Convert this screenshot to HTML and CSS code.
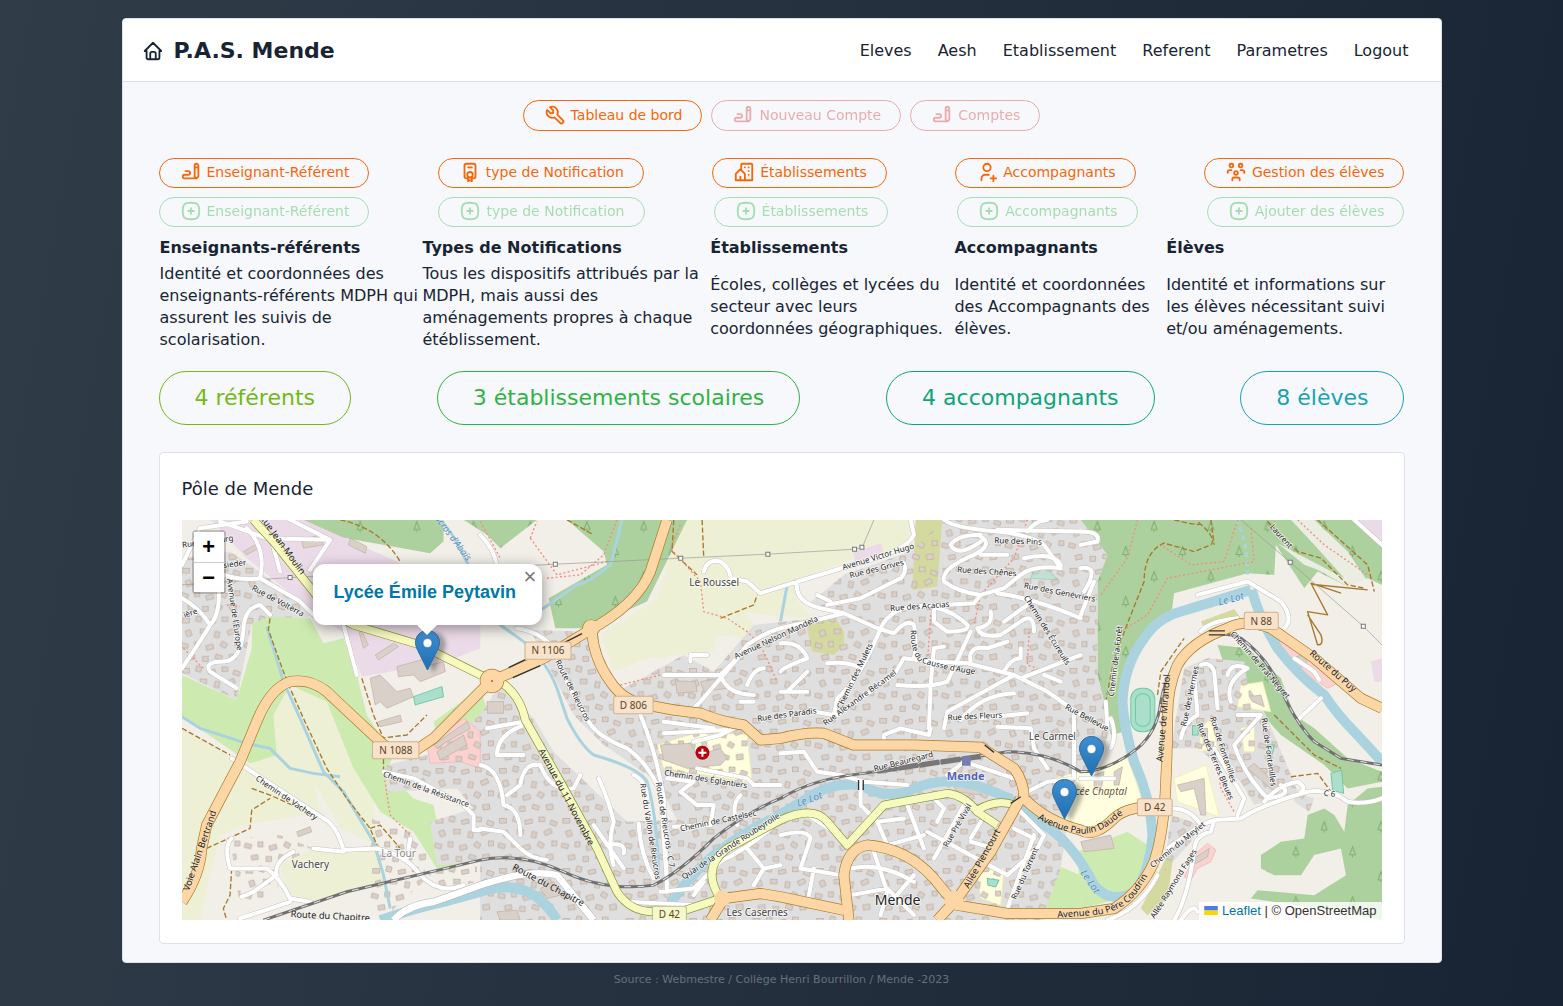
FILE: index.html
```html
<!DOCTYPE html>
<html lang="fr">
<head>
<meta charset="utf-8">
<meta name="viewport" content="width=device-width, initial-scale=1">
<title>P.A.S. Mende</title>
<link rel="stylesheet" href="styles.css">
</head>
<body>
<svg class="sprite" aria-hidden="true">
  <symbol id="i-home" viewBox="0 0 24 24"><path d="M5 12H3l9-9 9 9h-2M5 12v7a2 2 0 0 0 2 2h10a2 2 0 0 0 2-2v-7M9 21v-6a2 2 0 0 1 2-2h2a2 2 0 0 1 2 2v6"/></symbol>
  <symbol id="i-tool" viewBox="0 0 24 24"><path d="M7 10h3V7L6.500 3.500a6 6 0 0 1 8 8l6 6a2 2 0 0 1-3 3l-6-6a6 6 0 0 1-8-8L7 10"/></symbol>
  <symbol id="i-writing" viewBox="0 0 24 24"><path d="M20 17V5c0-1.121-.879-2-2-2s-2 .879-2 2v12l2 2 2-2zM16 7h4M18 19H5a2 2 0 1 1 0-4h4a2 2 0 1 0 0-4H6"/></symbol>
  <symbol id="i-certificate" viewBox="0 0 24 24"><path d="M9 15a3 3 0 1 0 6 0 3 3 0 1 0-6 0M10 7h4M10 18v4l2-1 2 1v-4M10 19H8a2 2 0 0 1-2-2V5a2 2 0 0 1 2-2h8a2 2 0 0 1 2 2v12a2 2 0 0 1-2 2h-2"/></symbol>
  <symbol id="i-building" viewBox="0 0 24 24"><path d="M8 9l5 5v7H8v-4m0 4H3v-7l5-5m1 1V4a1 1 0 0 1 1-1h10a1 1 0 0 1 1 1v17h-8M13 7v.01M17 7v.01M17 11v.01M17 15v.01"/></symbol>
  <symbol id="i-user-plus" viewBox="0 0 24 24"><path d="M8 7a4 4 0 1 0 8 0 4 4 0 0 0-8 0M16 19h6M19 16v6M6 21v-2a4 4 0 0 1 4-4h4"/></symbol>
  <symbol id="i-group" viewBox="0 0 24 24"><path d="M10 13a2 2 0 1 0 4 0 2 2 0 0 0-4 0M8 21v-1a2 2 0 0 1 2-2h4a2 2 0 0 1 2 2v1M15 5a2 2 0 1 0 4 0 2 2 0 0 0-4 0M17 10h2a2 2 0 0 1 2 2v1M5 5a2 2 0 1 0 4 0 2 2 0 0 0-4 0M3 13v-1a2 2 0 0 1 2-2h2"/></symbol>
  <symbol id="i-plus" viewBox="0 0 24 24"><path d="M9 12h6M12 9v6M12 3c7.200 0 9 1.800 9 9s-1.800 9-9 9-9-1.800-9-9 1.800-9 9-9z"/></symbol>
  <symbol id="i-marker" viewBox="0 0 25 41"><path fill="url(#pin)" stroke="#2a6ca5" d="M12.500.500C5.600.500.500 6 .500 12.600c0 3 1.200 5.600 2.300 8L12.500 40l9.700-19.400c1.100-2.400 2.300-5 2.300-8C24.500 6 19.400.500 12.500.500z"/><circle cx="12.500" cy="13" r="4.500" fill="#fff" stroke="#2a6ca5" stroke-width=".6"/></symbol>
  <defs><linearGradient id="pin" x1="0" y1="0" x2="0" y2="1"><stop offset="0" stop-color="#3f8fd0"/><stop offset="1" stop-color="#1e6fb4"/></linearGradient></defs>
</svg>

<div class="shell">
  <header class="topbar">
    <a class="brand" href="#"><svg class="icon"><use href="#i-home"/></svg><h1>P.A.S. Mende</h1></a>
    <nav class="menu">
      <a href="#">Eleves</a><a href="#">Aesh</a><a href="#">Etablissement</a><a href="#">Referent</a><a href="#">Parametres</a><a href="#">Logout</a>
    </nav>
  </header>

  <main class="content">
    <div class="tabs">
      <button class="btn orange" type="button"><svg class="icon"><use href="#i-tool"/></svg>Tableau de bord</button>
      <button class="btn red" type="button" disabled><svg class="icon"><use href="#i-writing"/></svg>Nouveau Compte</button>
      <button class="btn red" type="button" disabled><svg class="icon"><use href="#i-writing"/></svg>Comptes</button>
    </div>
    <div class="actions">
      <button class="btn orange" type="button"><svg class="icon"><use href="#i-writing"/></svg>Enseignant-Référent</button>
      <button class="btn orange" type="button"><svg class="icon"><use href="#i-certificate"/></svg>type de Notification</button>
      <button class="btn orange" type="button"><svg class="icon"><use href="#i-building"/></svg>Établissements</button>
      <button class="btn orange" type="button"><svg class="icon"><use href="#i-user-plus"/></svg>Accompagnants</button>
      <button class="btn orange" type="button"><svg class="icon"><use href="#i-group"/></svg>Gestion des élèves</button>
    </div>
    <div class="actions">
      <button class="btn green" type="button" disabled><svg class="icon"><use href="#i-plus"/></svg>Enseignant-Référent</button>
      <button class="btn green" type="button" disabled><svg class="icon"><use href="#i-plus"/></svg>type de Notification</button>
      <button class="btn green" type="button" disabled><svg class="icon"><use href="#i-plus"/></svg>Établissements</button>
      <button class="btn green" type="button" disabled><svg class="icon"><use href="#i-plus"/></svg>Accompagnants</button>
      <button class="btn green" type="button" disabled><svg class="icon"><use href="#i-plus"/></svg>Ajouter des élèves</button>
    </div>
    <table class="intro">
      <colgroup><col class="c1"><col class="c2"><col class="c3"><col class="c4"><col class="c5"></colgroup>
      <thead><tr><th>Enseignants-référents</th><th>Types de Notifications</th><th>Établissements</th><th>Accompagnants</th><th>Élèves</th></tr></thead>
      <tbody><tr>
        <td>Identité et coordonnées des enseignants-référents MDPH qui assurent les suivis de scolarisation.</td>
        <td>Tous les dispositifs attribués par la MDPH, mais aussi des aménagements propres à chaque étéblissement.</td>
        <td>Écoles, collèges et lycées du secteur avec leurs coordonnées géographiques.</td>
        <td>Identité et coordonnées des Accompagnants des élèves.</td>
        <td>Identité et informations sur les élèves nécessitant suivi et/ou aménagements.</td>
      </tr></tbody>
    </table>
    <div class="stats">
      <a class="stat lime" href="#">4 référents</a>
      <a class="stat leaf" href="#">3 établissements scolaires</a>
      <a class="stat teal" href="#">4 accompagnants</a>
      <a class="stat cyan" href="#">8 élèves</a>
    </div>

    <section class="card">
      <h2>Pôle de Mende</h2>
      <div class="map">
        <svg class="tiles" viewBox="6 15 3597 1200" preserveAspectRatio="xMidYMid slice" role="img" aria-label="Carte de Mende">
          <defs>
            <pattern id="houses" width="190" height="150" patternUnits="userSpaceOnUse">
              <g fill="#d9d0c9" stroke="#b9a99c" stroke-width="2">
                <rect x="8" y="10" width="20" height="14"/><rect x="48" y="4" width="16" height="16" transform="rotate(15 56 12)"/><rect x="84" y="14" width="22" height="12" transform="rotate(-12 95 20)"/><rect x="126" y="6" width="17" height="14"/><rect x="160" y="18" width="20" height="13" transform="rotate(20 170 24)"/>
                <rect x="18" y="46" width="16" height="18" transform="rotate(-20 26 55)"/><rect x="60" y="42" width="20" height="14"/><rect x="104" y="50" width="14" height="18" transform="rotate(10 111 59)"/><rect x="142" y="44" width="22" height="14" transform="rotate(-25 153 51)"/>
                <rect x="4" y="86" width="20" height="13" transform="rotate(14 14 92)"/><rect x="44" y="80" width="15" height="15"/><rect x="78" y="90" width="22" height="14" transform="rotate(-15 89 97)"/><rect x="122" y="82" width="18" height="15" transform="rotate(30 131 90)"/><rect x="164" y="78" width="16" height="14"/>
                <rect x="24" y="120" width="20" height="14" transform="rotate(-10 34 127)"/><rect x="68" y="124" width="16" height="15"/><rect x="106" y="120" width="20" height="13" transform="rotate(18 116 126)"/><rect x="148" y="118" width="20" height="16" transform="rotate(-8 158 126)"/>
              </g>
            </pattern>
            <pattern id="trees" width="170" height="150" patternUnits="userSpaceOnUse">
              <path d="M30 20l-9 24h18zM30 44v8M115 95l-9 24h18zM115 119v8" fill="none" stroke="#7fae72" stroke-width="3"/>
            </pattern>
            <path id="rail" d="M250 1215 500 1130 900 1035Q1020 1010 1150 1070 1280 1130 1420 1110 1500 1070 1600 970 1700 890 1800 850 1900 790 2050 775L2320 735 2480 710Q2600 710 2700 770 2780 770 2870 700 2930 650 2940 560 2960 450 3040 380 3110 340 3180 370 3250 420 3290 500 3340 620 3400 680L3480 730 3603 750"/>
            <path id="daude" d="M2570 912Q2640 950 2695 955 2750 960 2800 918 2830 890 2880 880"/>
            <path id="coudrin" d="M2630 1208 2740 1200Q2830 1190 2870 1130 2920 1060 2950 980"/>
            <path id="causse" d="M2190 345Q2190 410 2215 440 2280 465 2400 480"/>
          </defs>
          <path class="bare" d="M0 0H3610V1220H0z"/>
          <g class="farm">
            <path d="M6 640 200 750 270 600 300 540 400 510 500 620 580 860 590 990 480 940 420 830 400 810 430 910 370 900 200 930 120 960 60 1215H6z"/>
            <path d="M300 1050 400 1000 590 1000 610 1110 390 1160 320 1140z"/>
            <path d="M1500 15H2180L2190 100 2020 130 1840 200 1850 260 1900 310 1750 300 1690 290 1740 350 1700 370 1610 360 1600 410 1400 430 1300 470 1260 360 1430 250z"/>
          </g>
          <g class="grass">
            <path d="M6 480 170 555 215 400 215 320 270 300 390 310 430 385 490 370 530 480 560 600 640 720 620 770 700 850 760 870 780 970 900 990V1040L770 1060 700 950 600 890 520 760 440 560 330 510 280 600 290 720 210 745 6 605z"/>
            <path d="M760 620 900 520 925 600 900 720 780 700z"/>
            <path d="M2700 1180 2690 1010 2840 950 2900 990 2880 1090 2820 1150z"/><path d="M2590 1180 2640 1055 2700 1080V1190z"/>
            <path d="M1970 388 2050 400 2045 445 1960 432z"/><path d="M1950 840 2000 820 2005 835 1960 858z"/><path d="M1480 1165 1540 1110 1555 1165z"/>
          </g>
          <g class="forest">
            <path id="f1" d="M340 15H790V80L750 115 440 60zM850 15H1070L960 100 920 60zM1160 15H1520L1400 260 1310 300 1220 340 1125 340 1105 250 1280 150 1270 110z"/>
            <path id="f2" d="M2700 15H3603V210L3560 190 3500 215 3410 170 3370 220 3285 90 3280 180 3200 175 2980 235 2970 310 2900 340 2850 450 2820 600 2830 650 2790 660 2770 560 2750 480V200L2780 120 2700 60z"/>
            <path id="f3" d="M3110 390 3200 400 3300 490 3340 600 3400 640 3500 730 3603 770V800L3500 820 3430 750 3300 660 3210 560 3130 450z"/>
            <path id="f4" d="M3240 1020 3300 980 3370 970 3380 900 3430 880 3460 900 3490 950 3500 870 3560 820 3603 815V1215L3480 1190 3210 1150 3230 1125 3400 1140 3495 1080 3480 1000 3400 1020 3360 1080 3280 1080 3240 1060z"/>
          </g>
          <g fill="url(#trees)"><use href="#f1"/><use href="#f2"/><use href="#f3"/><use href="#f4"/></g>
          <path class="bare" d="M3290 85 3370 150 3410 165 3500 215 3560 200 3500 110 3400 15H3330L3400 90 3490 190z" opacity=".9"/>
          <path class="industrial" d="M90 15H370L650 140 900 330V400L800 440 545 485 500 360 410 300 200 130zM3520 15H3603V90zM2018 112 2100 85 2115 125 2025 150zM3570 440 3603 430V500H3580z"/>
          <g class="town">
            <path id="t1" d="M6 130 150 110 210 150 400 290 380 310 270 305 215 325 170 555 6 475z"/>
            <path id="t2" d="M1050 345 1210 350 1290 480 1330 520 1510 420 1600 470 1720 330 1860 315 1990 300 1880 270 1990 180 2190 110 2290 15H2700L2780 120 2750 200V480L2790 640 2760 720 2680 800 2640 1060 2590 1190V1215H900V1040L770 1050 750 920 880 880 830 820 620 830 620 750 740 720 900 600 960 510 1060 610 1120 710 1340 920 1490 915 1430 800 1270 690 1180 600z"/>
            <path id="t3" d="M3010 460 3080 430 3190 440 3200 510 3250 590 3330 780 3350 830 3220 870 3180 800 3050 700 2970 700zM2970 900 3060 930 3030 980 2950 1070zM3340 830 3400 850 3385 890 3340 860z"/>
          </g>
          <path class="scrub" d="M2205 15H2285L2270 215 2195 225zM1875 320 1965 310 1990 350V390L1960 420 1895 410zM3060 320 3160 282 3180 310 3070 340zM2960 1020 2975 1040 2960 1150 2900 1200 2880 1180z"/>
          <path class="school" d="M1430 690 1560 650 1700 660 1715 805 1640 790 1450 760zM2620 790 2840 730 2890 870 2750 940 2650 930zM2980 790 3075 750 3115 905 2990 860zM3180 510 3245 500 3270 590 3170 575zM3060 640 3090 610 3110 700 3055 710zM3180 640 3220 630V710H3190zM2390 1070 2470 1060 2460 1170 2400 1150z"/>
          <path class="retail" d="M3280 350 3440 460 3480 500 3440 520 3330 450zM740 690 850 610 900 650V760L840 740 750 745zM3050 1010 3080 985 3105 1005 3090 1040 3050 1060 3030 1095 3010 1085z"/>
          <g fill="url(#houses)"><use href="#t1"/><use href="#t2"/><use href="#t3"/><path d="M150 970 300 960 400 1000 300 1050 290 1130 180 1180zM570 910 700 950 740 1010 730 1100 620 1200 570 1180zM740 1070 890 1050V1100L780 1130z"/></g>
          <g class="building">
            <path d="M650 455 740 430 750 450 790 440 795 470 720 500 700 480 655 485zM570 490 600 480 650 530 690 520 700 545 620 580 600 560 585 570zM365 75 420 60 430 90 370 100zM510 70 560 95 555 115 505 90zM190 110 225 90 235 100 200 120zM585 420 640 385 655 395 595 435zM540 340 565 390 550 400 538 355zM760 690 860 620 870 640 800 680 770 700zM770 710 850 660 860 690 780 735zM595 620 660 600 665 620 600 635zM350 950 390 935 395 950 355 965z"/>
            <path d="M1440 690 1530 685 1550 720 1620 700 1640 730 1620 750 1520 760 1450 735zM1485 498 1545 500 1550 530 1490 535zM1560 500 1620 490 1640 520 1570 530zM1080 1120 1120 1100 1140 1140 1100 1150zM950 1190 1010 1185 1020 1215H960zM920 560 970 560V595H922z"/>
            <path d="M2990 810 3070 790 3075 900 3060 900 3040 820 3000 830zM2800 770 2825 755 2815 810 2800 810zM2740 780 2770 770 2760 830 2740 820zM2700 980 2790 960 2800 1000 2710 1010zM3320 430 3370 420 3380 450 3350 460zM3205 545 3240 540 3250 575 3215 560zM3200 760 3220 745 3300 820 3280 830zM3065 640 3080 640V690H3068zM3040 1030 3085 1000 3080 1025 3045 1045zM2310 800 2380 780 2400 840 2330 830z"/>
          </g>
          <g class="pitch"><rect x="2850" y="520" width="72" height="130" rx="32"/><rect x="2864" y="536" width="44" height="98" rx="20"/><path d="M700 545 785 515 790 545 705 570zM3450 775 3482 765 3488 835 3455 825zM2420 1090 2455 1095 2445 1115 2422 1110zM3035 632H3052V660H3035zM3260 690H3280L3275 715H3262z"/><path d="M2560 165 2600 160 2630 195 2550 190z" opacity=".5"/></g>

          <g class="river">
            <path d="M3210 225Q3100 260 3000 290 2930 310 2890 370 2830 450 2825 560 2830 640 2860 740 2910 850 2915 960 2905 1080 2860 1130 2790 1170 2740 1110 2690 1010 2620 950L2500 860Q2450 830 2380 810 2280 780 2180 830 2110 850 2040 810 1950 800 1880 850L1780 910Q1580 1000 1470 1165"/>
            <path d="M3212 225Q3240 320 3290 400 3350 480 3430 540 3470 600 3520 650L3603 740"/>
            <path d="M600 1215Q700 1180 790 1160L900 1130Q1050 1080 1130 1215"/>
          </g>
          <g class="stream">
            <path d="M1325 15Q1310 80 1290 150 1230 200 1190 210L1090 280 960 330 1030 380Q1100 440 1130 520L1160 610Q1200 690 1240 720 1380 760 1400 800 1430 900 1435 1080"/>
            <path d="M780 15Q820 60 830 85L960 330M260 335 310 500 360 610 430 770 490 830 580 980 610 1080 630 1180M6 605 60 640 200 685 270 700 330 760 400 775 480 785M1820 210 1800 320"/>
            <path d="M3165 15Q3200 70 3200 190" stroke-dasharray="14 12"/>
          </g>
          <path class="track" d="M270 310 265 345 310 470 330 520 370 610 440 760 500 850 570 940 590 990M6 640 150 720M215 820 270 840 370 885M80 1000 210 940 215 885 270 850M155 1060 150 1140 130 1180 140 1215M545 490 580 600 610 670V770M600 670 680 660 740 600M480 15Q600 40 660 140M1160 15 1240 60M1480 15 1475 110 1550 180M1565 15 1570 130M1620 310 1720 270 1730 240M2980 15Q3080 40 3050 20 3110 70 3090 90L3040 110 2950 85Q2890 110 2890 200L2850 300 2800 430 2775 560M3090 15 3100 90M3260 20 3350 110 3420 130 3500 210 3550 220M3410 15 3560 150 3580 230M2930 540 2940 470 3010 370M3280 600 3400 720 3480 760M3330 785 3410 775 3450 830M570 940 600 930 660 1000"/>
          <path class="track solid" d="M3480 235 3390 205 3440 300 3380 290 3410 390Q3430 390 3420 360L3380 300M3390 208 3560 225"/>
          <path class="path" d="M900 20 960 130M1050 70 1070 20M1050 70 1130 180 1280 140M1100 190 1200 180 1270 120 1310 15M1500 30 1470 100 1560 200 1570 290 1640 310 1700 350 1740 390 1790 500M1320 510 1440 480M2870 15 2840 130 2760 240M3170 15 3130 140 3030 150 2940 90M3210 40 3220 140 2960 190 2900 300 2820 350M3350 15 3430 90 3560 180M2540 15 2500 130 2400 240 2380 330M2545 350 2540 450 2570 460M610 770 630 900 690 960M3100 700 3120 820 3160 890M2250 300 2240 450M140 270 180 275M10 400 70 460"/>
          <path class="power" d="M6 210 330 188 1125 148 1500 130 1760 118 2022 103 2045 98 2080 15M3180 15 3328 142 3547 334 3603 390"/>
          <g class="pylon"><path d="M324 182h12v12h-12zM1119 142h12v12h-12zM1495 124h12v12h-12zM1756 112h12v12h-12zM2016 97h12v12h-12zM2038 91h12v12h-12zM3322 136h12v12h-12zM3541 328h12v12h-12z"/></g>

          <g class="street-case">
            <path id="s1" d="M6 460Q80 350 90 330 60 280 6 250M90 330Q130 290 110 170L60 150M6 150 60 40 200 20M120 20 260 70 440 75M200 40Q260 100 240 190L360 260 400 300M270 60 300 170M330 15 450 75 390 165M170 520 90 470Q70 440 130 440 180 440 190 350 190 280 240 270L270 300M100 170Q180 200 240 190M490 330 530 480"/>
            <path id="s2" d="M155 730 200 760 430 910Q470 930 490 1005L590 1000Q680 1020 720 1080 780 1140 850 1110M400 1000 490 1010M155 970Q130 990 150 1060L260 1060Q300 1090 330 1150L390 1160M340 1010Q280 1040 290 1080L220 1130 185 1145M180 1210 330 1160M610 770 700 790 850 870 880 900V945H900M690 970 680 1030"/>
            <path id="s3" d="M900 940 970 950 1020 1000Q1050 1030 1100 1035M900 750Q960 760 970 870 1020 880 1020 960M920 640 1030 620M950 720H1030M950 720Q950 660 1030 630M980 840 1020 810Q1030 740 1080 750 1110 830 1180 820L1200 780M1255 790Q1290 870 1300 920 1280 990 1300 1050M1240 930 1330 1060M1280 990Q1340 980 1330 1015M1010 340Q1080 350 1120 400 1150 500 1220 610 1240 660 1340 700 1400 740 1440 830L1460 1110M1380 600Q1430 720 1450 850L1460 1130M1375 925Q1380 1020 1420 1090M1360 780Q1400 800 1400 850M1450 620 1600 640M1450 655 1640 645M1540 680 1620 660 1680 630M1550 760 1700 790 1720 810H1800M1460 790 1540 800 1500 830 1550 870H1600L1590 930 1480 935M1670 930Q1650 870 1680 840M1440 1130 1540 1120 1620 1040Q1750 970 1800 910M1340 1160 1550 1170M1700 1000 1750 1060 1720 1110M1750 1060 1800 1050"/>
            <path id="s4" d="M900 60Q940 100 950 150M1570 170Q1580 130 1620 140 1650 160 1650 190L1700 200 1740 235 1850 200 2000 155Q2180 110 2200 60L2190 15M1450 480 1620 480 1660 440 1700 390Q1760 350 1800 340L1930 310 1990 295M1520 600 1560 560 1680 420M1530 440V420H1580M1620 480Q1640 540 1720 540M1680 560H1720M1700 510Q1720 460 1750 460M1850 200Q1840 260 1920 280L1990 295 2090 340 2140 355Q2180 310 2200 330 2210 380 2200 430M1940 270 2040 250 2160 190Q2180 170 2170 145M1910 240 1950 260M1800 385Q1860 380 1880 430 1800 460 1800 470M1820 530 1880 470M1800 530H1880M1940 445Q2000 440 2030 455M1900 590 1960 600 1970 550Q2040 490 2100 340 2130 280 2200 275L2380 265 2400 240 2470 220 2520 180Q2560 150 2640 160L2590 90Q2550 60 2450 50 2320 40 2290 15"/>
            <path id="s5" d="M2400 60Q2330 60 2310 90 2330 130 2400 80M2400 65Q2440 90 2380 120 2280 160 2290 200 2330 230 2400 240M2450 235Q2560 250 2700 310M2270 280Q2320 290 2360 330 2370 350 2300 350L2260 320V280M2560 350Q2560 290 2520 320L2460 360Q2400 370 2390 340 2440 330 2430 290M2540 270 2470 320M2370 350 2300 500Q2240 520 2150 510M2245 640 2250 510 2260 400 2290 395M1970 600 2140 480 2170 430Q2240 440 2360 445L2500 480 2600 530 2700 600M2370 440Q2360 390 2420 400L2480 380M2470 470Q2490 430 2520 430V400M2520 490 2700 420M2590 480 2640 500M2500 480 2300 590 2290 640M2340 615Q2400 540 2500 535M2400 610 2540 595M2530 130Q2620 110 2640 150M2540 50Q2560 20 2600 15M2400 120H2480M2450 45 2700 50"/>
            <path id="s6" d="M2700 50Q2760 50 2750 80L2700 90M2700 160Q2760 150 2710 230M2740 200 2700 300M3050 240 3200 200 3300 260Q3340 310 3310 340M3060 350Q3080 320 3170 310M3060 450Q3090 440 3100 470L3110 580M3140 480Q3150 440 3200 460 3130 500 3150 560M3340 430 3400 470 3415 495M3350 615 3420 550M2775 560 2780 640M3520 15 3603 90M2700 790H2800M2790 610Q2810 660 2790 700M3000 670Q3010 620 3050 600L3040 480M3170 600 3240 600 3160 690Q3190 780 3260 850 3340 840 3300 810M3170 900 3190 850 3100 700M2975 880Q3030 880 3060 930L3100 915 3180 910Q3240 870 3380 830 3450 820 3500 860 3550 870 3603 850M3100 915 3090 950Q3040 960 3040 1010 3020 1150 2980 1215M3250 860Q3290 810 3350 800 3380 820 3360 830M2960 1000 3060 930M2780 1215Q2880 1180 2930 1080M3000 1215Q3040 1160 3050 1190"/>
            <path id="s7" d="M1800 715 1870 710 1910 770 1980 780 2050 800 2180 810M2250 640 2245 660 2160 640 2110 660V690M2040 800 2040 870 2090 920 2120 990 2230 960M2090 920 2170 910M2180 870 2230 1000M2260 850 2290 880 2270 920M2300 780 2350 740 2500 790M2500 870 2590 960 2570 1000 2480 1080M2240 950 2480 1080M2260 1030 2350 870M2370 970 2400 920M2370 980 2440 1000M2560 960 2480 1180M2540 830 2600 800 2680 790 2680 600M2500 940 2560 970M1800 960Q1880 940 1890 970L1860 1060 1980 1080M1900 1060 1880 1170M2010 1060Q2100 1040 2200 1100M2010 1140 2120 1120 2200 1200M2080 1010 2120 1130 2100 1200M2200 1080 2140 1150M1890 905 1990 970M1540 1140 1570 1100M2450 635 2550 640 2560 700 2600 760"/>
          </g>
          <g class="street"><use href="#s1"/><use href="#s2"/><use href="#s3"/><use href="#s4"/><use href="#s5"/><use href="#s6"/><use href="#s7"/></g>
          <g class="avenue-case"><path id="v1" d="M640 1215Q680 1170 760 1160 820 1140 900 1110 1050 1060 1130 1080L1240 1215"/></g>
          <g class="avenue"><use href="#v1"/></g>

          <use href="#rail" class="rail"/>
          <use href="#rail" class="rail-dash"/>
          <path class="rail-yard" d="M2090 768 2400 724"/>

          <g class="secondary-case"><path id="y1" d="M220 15 280 80 400 230Q440 290 520 330L720 390 900 480 960 500Q1020 540 1035 615L1140 800 1250 1000 1310 1130Q1350 1190 1420 1190L1500 1190 1620 1150Q1560 1060 1640 1000L1800 915Q1900 870 1940 920L2000 990 2110 870 2300 835Q2350 840 2390 890L2450 930M2390 885Q2450 850 2500 870"/></g>
          <g class="secondary"><use href="#y1"/></g>
          <g class="primary-case"><path id="p1" d="M6 1160Q60 1080 65 1000L80 930 180 740 230 620Q270 520 330 500 390 490 440 530L600 680Q650 725 700 710L760 670 830 600 930 500 1090 430 1220 350Q1370 270 1410 170L1460 15M1235 350Q1240 430 1290 500 1330 560 1400 570L1480 585 1560 595Q1620 620 1690 630L1740 675 1800 670Q1880 650 1930 655L2020 690 2200 690 2400 697 2500 760Q2530 800 2530 850 2600 920 2700 945 2740 970 2800 910 2830 880 2900 875L2960 870M3603 580 3540 550 3400 430 3270 340Q3190 310 3140 340 3030 380 2990 450 2960 520 2960 600 2960 700 2955 800 2950 950 2920 1040 2880 1130 2800 1180L2700 1195 2480 1195 2330 1170Q2290 1130 2260 1090 2180 1000 2060 990 2000 1000 1990 1080L2005 1215M2520 850 2430 1010 2330 1150 2270 1215M1990 1185 1800 1145 1740 1135 1630 1150 1590 1215"/><circle cx="935" cy="498" r="20"/><circle cx="1232" cy="340" r="10"/></g>
          <g class="primary"><use href="#p1"/><circle cx="935" cy="498" r="20"/><circle cx="1232" cy="340" r="10"/><circle cx="2320" cy="1155" r="14"/><circle cx="1625" cy="1150" r="10"/></g>
          <circle cx="935" cy="498" r="3" fill="#a06b00"/>
          <path class="bridge" d="M1115 402 1205 356M985 458 1035 434M998 488 1080 452M2490 865 2520 845M2412 690 2440 712M3084 348H3132M3084 360H3132M2034 795V825M2048 795V825"/>

          <circle cx="1566" cy="713" r="21" fill="#b90010"/><path d="M1554 713h24M1566 701v24" stroke="#fff" stroke-width="6"/>
          <path d="M2344 725h26v27h-26z" fill="#757db3"/>

          <g class="label">
            <text x="1601" y="213" class="place">Le Roussel</text><text x="2615" y="675" class="place">Le Carmel</text><text x="391" y="1058" class="place">Vachery</text><text x="655" y="1026" class="place faded">La Tour</text><text x="1730" y="1202" class="place">Les Casernes</text><text x="2151" y="1169" class="city">Mende</text><text x="2355" y="794" class="station">Mende</text><text x="2746" y="839" class="place school-name">Lycée Chaptal</text>
            <text transform="translate(300 95) rotate(54)" class="big">Rue Jean Moulin</text>
            <text transform="translate(290 265) rotate(28)">Rue de Volterra</text>
            <text transform="translate(156 300) rotate(82)">Avenue de l'Europe</text>
            <text transform="translate(34 302) rotate(-20)">ière</text><text transform="translate(165 155) rotate(-8)">sieder</text><text transform="translate(84 88) rotate(-8)">Rue du Bourg</text>
            <text transform="translate(800 60) rotate(53)" class="water big">Rieucros d'Abaïs</text>
            <text transform="translate(1170 530) rotate(63)">Route de Rieucros</text>
            <text transform="translate(1150 850) rotate(62)" class="big">Avenue du 11 Novembre</text>
            <text transform="translate(1402 950) rotate(81)">Rue du Vallon de Rieucros</text>
            <text transform="translate(1446 930) rotate(81)">Route de Rieucros - C 7</text>
            <text transform="translate(1575 800) rotate(9)">Chemin des Églantiers</text>
            <text transform="translate(1615 925) rotate(-12)">Chemin de Castelsec</text>
            <text transform="translate(1655 1000) rotate(-33)">Quai de la Grande Roubeyrolle</text>
            <text transform="translate(315 855) rotate(34)">Chemin de Vachery</text>
            <text transform="translate(735 830) rotate(20)">Chemin de la Résistance</text>
            <text transform="translate(68 1010) rotate(-71)" class="big">Voie Alain Bertrand</text>
            <text transform="translate(450 1212) rotate(3)" class="big">Route du Chapitre</text>
            <text transform="translate(1100 1118) rotate(28)" class="big">Route du Chapitre</text>
            <text transform="translate(1790 375) rotate(-25)">Avenue Nelson Mandela</text>
            <text transform="translate(2095 133) rotate(-17)">Avenue Victor Hugo</text><text transform="translate(2090 170) rotate(-14)">Rue des Grives</text>
            <text transform="translate(2218 282) rotate(-4)">Rue des Acacias</text>
            <text transform="translate(2030 487) rotate(-64)">Chemin des Mulets</text>
            <text transform="translate(2042 555) rotate(-36)">Rue Alexandre Bécamel</text>
            <text class="along"><textPath href="#causse">Route du Causse d'Auge</textPath></text>
            <text transform="translate(1820 607) rotate(-8)">Rue des Paradis</text><text transform="translate(2383 612) rotate(-3)">Rue des Fleurs</text>
            <text transform="translate(2512 87) rotate(2)">Rue des Pins</text><text transform="translate(2418 178) rotate(4)">Rue des Chênes</text><text transform="translate(2635 240) rotate(11)">Rue des Genévriers</text>
            <text transform="translate(2592 350) rotate(58)">Chemin des Écureuils</text>
            <text transform="translate(2715 615) rotate(28)">Rue Bellevue</text>
            <text transform="translate(2170 747) rotate(-14)">Rue Beauregard</text>
            <text transform="translate(1890 862) rotate(-20)" class="water place">Le Lot</text><text transform="translate(3153 262) rotate(-15)" class="water place">Le Lot</text><text transform="translate(2720 1105) rotate(55)" class="water place">Le Lot</text>
            <text transform="translate(2337 935) rotate(-60)">Rue Pré Vival</text><text transform="translate(2412 1035) rotate(-61)" class="big">Allée Piencourt</text><text transform="translate(2540 1078) rotate(-66)">Rue du Torrent</text>
            <text class="big along"><textPath href="#daude">Avenue Paulin Daudé</textPath></text>
            <text transform="translate(2957 610) rotate(-85)" class="big">Avenue de Mirandol</text>
            <text transform="translate(2812 440) rotate(-83)">Chemin de la Forêt</text>
            <text transform="translate(3035 545) rotate(-78)">Rue des Hermes</text>
            <text transform="translate(3232 455) rotate(49)">Chemin de Prat Negret</text>
            <text transform="translate(3450 475) rotate(41)" class="big">Route du Puy</text>
            <text transform="translate(3119 706) rotate(72)">Rue de Fontanilles</text><text transform="translate(3096 742) rotate(67)">Rue des Terres Bleues</text><text transform="translate(3256 712) rotate(82)">Rue de Fontanilles</text>
            <text transform="translate(3445 844) rotate(6)">C 6</text>
            <text transform="translate(3295 70) rotate(48)">Laurent</text>
            <text transform="translate(2995 995) rotate(-39)">Chemin du Meylet</text><text transform="translate(2985 1110) rotate(-58)">Allée Raymond Fages</text>
            <text class="big along"><textPath href="#coudrin">Avenue du Père Coudrin</textPath></text>
          </g>
          <g class="shield">
            <rect x="1034" y="381" width="138" height="52" rx="6"/><rect x="1300" y="544" width="118" height="52" rx="6"/><rect x="577" y="680" width="139" height="51" rx="6"/><rect x="3190" y="292" width="102" height="52" rx="6"/><rect x="2870" y="851" width="104" height="51" rx="6"/><rect class="yellow" x="1416" y="1173" width="102" height="52" rx="6"/>
            <text x="1103" y="418">N 1106</text><text x="1359" y="581">D 806</text><text x="647" y="717">N 1088</text><text x="3241" y="329">N 88</text><text x="2922" y="887">D 42</text><text x="1467" y="1209">D 42</text>
          </g>
        </svg>
        <svg class="marker m1"><use href="#i-marker"/></svg>
        <svg class="marker m2"><use href="#i-marker"/></svg>
        <svg class="marker m3"><use href="#i-marker"/></svg>
        <div class="popup"><a href="#">Lycée Émile Peytavin</a><button class="close" type="button" aria-label="Fermer">×</button></div>
        <div class="zoom"><button type="button" aria-label="Zoom avant">+</button><button type="button" aria-label="Zoom arrière">−</button></div>
        <div class="credit"><svg viewBox="0 0 12 8"><path fill="#4c7be1" d="M0 0h12v4H0z"/><path fill="#ffd500" d="M0 4h12v4H0z"/></svg><a href="#">Leaflet</a> | © OpenStreetMap</div>
      </div>
    </section>
  </main>
</div>
<footer class="footer">Source : Webmestre / Collège Henri Bourrillon / Mende -2023</footer>
</body>
</html>
```

FILE: styles.css
```css
* { box-sizing: border-box; }
body {
  margin: 0;
  min-height: 100vh;
  padding: 18px 20px 0;
  background: linear-gradient(100deg, #303c48, #182433);
  color: #182433;
  font: 16px/22px "DejaVu Sans", sans-serif;
}
a { color: inherit; text-decoration: none; }
h1, h2 { margin: 0; }
.sprite { position: absolute; width: 0; height: 0; }
.icon { width: 22px; height: 22px; flex: none; fill: none; stroke: currentColor; stroke-width: 2; stroke-linecap: round; stroke-linejoin: round; }

.shell { max-width: 1320px; margin: 0 auto; background: #f6f8fb; border: 1px solid #dce1e7; border-radius: 4px; overflow: hidden; }
.topbar { display: flex; justify-content: space-between; align-items: center; min-height: 63px; padding: 2px 32px 0 19px; background: #fff; border-bottom: 1px solid #dadfdf; }
.brand { display: flex; align-items: center; gap: 10px; }
.brand h1 { font-size: 22px; line-height: 32px; }
.menu { display: flex; gap: 26px; }

.content { padding: 18px 36px; }
.tabs { display: flex; justify-content: center; gap: 9px; margin-bottom: 27px; }
.actions { display: flex; justify-content: space-between; margin-bottom: 9px; }
.btn { display: flex; align-items: center; gap: 5px; height: 31px; padding: 0 19px 2px 20px; background: none; border: 1px solid; border-radius: 18px; font: 14px/20px "DejaVu Sans", sans-serif; }
.actions .btn { height: 30px; }
.btn:disabled { opacity: .4; }
.orange { color: #f76707; }
.red { color: #d63939; }
.green { color: #2fb344; }

.intro { width: 100%; table-layout: fixed; border-collapse: collapse; }
.intro th, .intro td { padding: 1px; text-align: left; }
.intro td { height: 93px; vertical-align: middle; }
.c1 { width: 21.1%; }
.c2 { width: 23.1%; }
.c3 { width: 19.6%; }
.c4 { width: 17%; }
.c5 { width: 19.2%; }

.stats { display: flex; justify-content: space-between; margin: 18px 0 27px; }
.stat { padding: 10px 35px; border: 1px solid; border-radius: 27px; font-size: 22px; line-height: 32px; }
.lime { color: #74b816; }
.leaf { color: #2fb344; }
.teal { color: #0ca678; }
.cyan { color: #17a2b8; }

.card { padding: 23px 22px; background: #fff; border: 1px solid #dce1e7; border-radius: 4px; }
.card h2 { margin-bottom: 18px; font-size: 18px; line-height: 26px; font-weight: 400; }
.map { position: relative; height: 400px; overflow: hidden; font-family: "Liberation Sans", Arial, sans-serif; }
.tiles { display: block; width: 100%; height: 400px; }

.bare { fill: #f2efe9; }
.farm { fill: #eef0d5; }
.grass { fill: #cdebb0; }
.forest { fill: #add19e; }
.industrial { fill: #ebdbe8; }
.town { fill: #e0dfdf; }
.scrub { fill: #d4d9a0; }
.school { fill: #ffffe0; stroke: #f0ee9a; stroke-width: 2; }
.retail { fill: #fbd2cf; stroke: #efb0b0; stroke-width: 2; }
.building { fill: #d9d0c9; stroke: #bfae9f; stroke-width: 2; }
.pitch { fill: #aae0cb; stroke: #74c7a4; stroke-width: 3; }
.river, .stream, .track, .path, .power, .street-case, .street, .avenue-case, .avenue, .secondary-case, .secondary, .primary-case, .primary { fill: none; stroke-linejoin: round; }
.river { stroke: #aad3df; stroke-width: 30; }
.stream { stroke: #aad3df; stroke-width: 9; }
.track { stroke: #a5782a; stroke-width: 4; stroke-dasharray: 16 7; }
.track.solid { stroke-dasharray: none; }
.path { stroke: #f58b7e; stroke-width: 4; stroke-dasharray: 6 7; }
.power { stroke: #999; stroke-width: 2; }
.pylon { fill: #fff; stroke: #777; stroke-width: 3; }
.street-case { stroke: #c6c4c2; stroke-width: 15; stroke-linecap: round; }
.street { stroke: #fff; stroke-width: 12; stroke-linecap: round; }
.avenue-case { stroke: #b5b3b0; stroke-width: 23; }
.avenue { stroke: #fff; stroke-width: 20; }
.rail { fill: none; stroke: #707070; stroke-width: 9; }
.rail-dash { fill: none; stroke: #e8e8e8; stroke-width: 3; stroke-dasharray: 20 20; }
.rail-yard { fill: none; stroke: #777; stroke-width: 16; stroke-dasharray: 60 4; }
.secondary-case { stroke: #8a9230; stroke-width: 26; }
.secondary { stroke: #f7fabf; stroke-width: 22; }
.primary-case { stroke: #a97a25; stroke-width: 33; }
.primary { stroke: #fcd6a4; stroke-width: 29; }
.primary circle { fill: #fcd6a4; }
.bridge { fill: none; stroke: #333; stroke-width: 4; }
.label text { font-family: "Noto Sans", sans-serif; font-size: 24px; text-anchor: middle; fill: #222; stroke: #fff; stroke-opacity: .8; stroke-width: 5; stroke-linejoin: round; paint-order: stroke; }
.label .along { text-anchor: start; }
.label .big { font-size: 28px; stroke-opacity: .2; }
.label .place { font-size: 30px; fill: #444; }
.label .faded { fill: #888; }
.label .school-name { font-style: italic; fill: #6d5a1d; }
.label .city { font-size: 42px; }
.label .station { font-size: 33px; font-weight: 700; fill: #5560b5; }
.label .water { font-style: italic; fill: #5a8fc0; stroke-opacity: .2; }
.shield rect { fill: #f7e2cb; stroke: #d6b08a; stroke-width: 3; }
.shield .yellow { fill: #f5f7cd; stroke: #bcc07c; }
.shield text { font-family: "Noto Sans", sans-serif; font-size: 30px; text-anchor: middle; fill: #5c421d; }

.marker { position: absolute; width: 25px; height: 41px; filter: drop-shadow(6px 2px 2px rgba(0, 0, 0, .3)); }
.m1 { left: calc(50% - 367px); top: 110px; }
.m2 { left: calc(50% + 297px); top: 216px; }
.m3 { left: calc(50% + 270px); top: 259px; }
.popup { position: absolute; left: calc(50% - 469px); top: 44px; padding: 17px 26px 21px 21px; background: #fff; border-radius: 12px; box-shadow: 0 3px 14px rgba(0, 0, 0, .4); }
.popup::after { content: ""; position: absolute; left: 50%; top: 100%; margin-left: -10px; border: 10px solid transparent; border-top-color: #fff; border-bottom: 0; }
.popup a { color: #0078a8; font-size: 18px; font-weight: 700; line-height: 22px; }
.close { position: absolute; top: 1px; right: 0; width: 24px; height: 24px; padding: 0; border: 0; background: none; color: #757575; font: 22px/24px "Liberation Sans", sans-serif; }
.zoom { position: absolute; left: 10px; top: 10px; display: grid; border: 2px solid rgba(0, 0, 0, .2); border-radius: 4px; background-clip: padding-box; }
.zoom button { width: 30px; height: 30px; padding: 4px 0 0; background: #fff; border: 0; color: #000; font: bold 22px/26px "Liberation Mono", monospace; }
.zoom button + button { border-top: 1px solid #ccc; }
.credit { position: absolute; right: 0; bottom: 0; padding: 0 5px; background: rgba(255, 255, 255, .8); color: #333; font-size: 13px; line-height: 18px; }
.credit svg { width: 14px; height: 9px; margin-right: 4px; }
.credit a { color: #0078a8; }
.footer { padding: 9px 0 18px; color: #667080; font-size: 11px; line-height: 16px; text-align: center; }
```
